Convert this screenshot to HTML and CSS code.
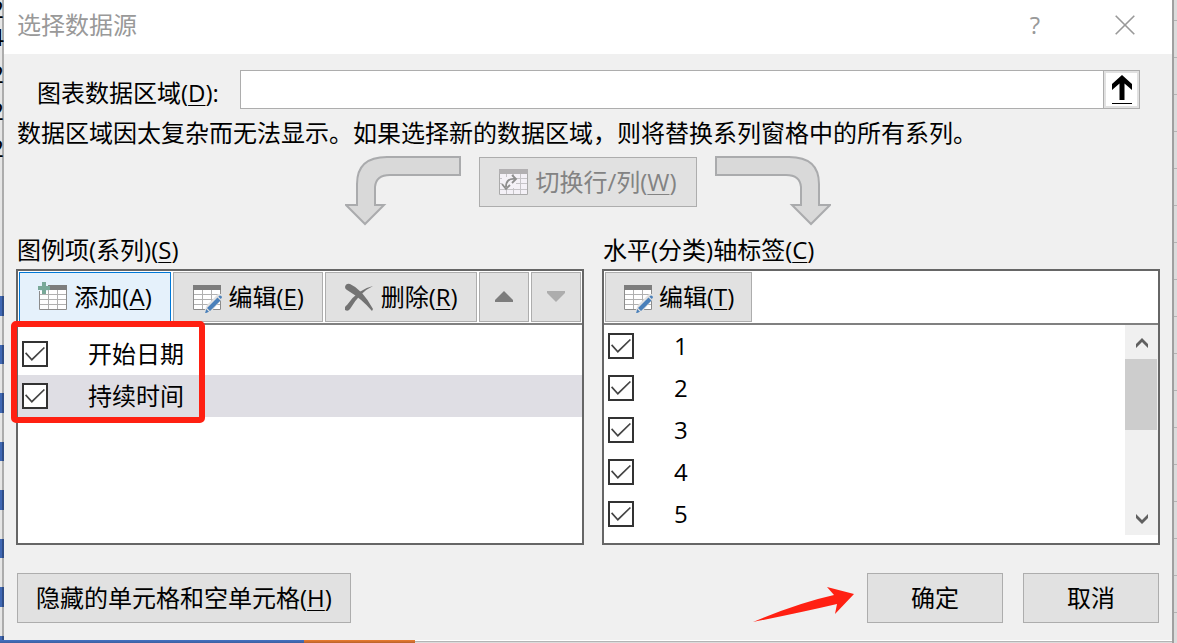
FILE: index.html
```html
<!DOCTYPE html>
<html lang="zh-CN">
<head>
<meta charset="utf-8">
<title>选择数据源</title>
<link rel="stylesheet" href="styles.css">
</head>
<body>
<svg class="defs" aria-hidden="true">
  <symbol id="grid" viewBox="0 0 30 32">
    <path fill="#fff" d="M1 4h28v25H1z"/>
    <path stroke="#b0b0b0" fill="none" d="M10.500 8v21M19.500 8v21M1 13.500h28M1 18.500h28M1 23.500h28"/>
    <path stroke="#8c8c8c" fill="none" d="M1.500 4v24.500h27V4"/>
    <path fill="#7d7d7d" d="M1 4h28v5H1z"/>
  </symbol>
  <symbol id="edit" viewBox="0 0 30 32">
    <use href="#grid" width="30" height="32"/>
    <path fill="#e1e1e1" d="M11 33l4-9 11-11h4v5L19 31z"/>
    <path fill="#4a80ba" d="M13 32.500l1.200-4.500 2.800 2.800zM15 27L25.500 16.500l3 3L18 30zM26.300 15.700l1-1q1-.7 2 .3t.3 2l-.8 1z"/>
  </symbol>
</svg>
<div class="desk">
  <div class="rows" aria-hidden="true"><span>2</span><span>4</span><span>2</span><span>2</span><span>2</span></div>
  <main class="dialog">
    <header class="titlebar">
      <h1>选择数据源</h1>
      <button class="plain" aria-label="帮助">?</button>
      <button class="plain" aria-label="关闭"><svg width="20" height="20"><path d="M.7.7l18.600 18.600M19.300.7L.7 19.300" stroke="#999" stroke-width="1.600"/></svg></button>
    </header>
    <div class="content">
      <div class="range">
        <label for="range">图表数据区域(<u>D</u>):</label>
        <div class="field"><input id="range" type="text"><button aria-label="选择区域"><svg width="20" height="30"><path d="M10 0l10 9v6l-7.500-6.500V25h-5V8.500L0 15V9zM0 28h20v1H0z"/></svg></button></div>
      </div>
      <p class="note">数据区域因太复杂而无法显示。如果选择新的数据区域，则将替换系列窗格中的所有系列。</p>
      <div class="swap">
        <svg class="bend" width="116" height="70" viewBox="0 0 116 70"><path d="M115 1H42Q12 1 12 28V49H1L20 68 39 49H30V31Q31 19 45 19H115z"/></svg>
        <button class="btn switch" disabled>
          <svg width="30" height="26"><path fill="#f4f1f7" d="M0 0h29v26H0z"/><path d="M7.500 4v22M14.500 4v22M21.500 4v22M0 9.500h29M0 14.500h29M0 20.500h29" stroke="#c6c4c8"/><path d="M.5 4v21.500h28V4" fill="none" stroke="#aaa"/><path fill="#b2b0b2" d="M0 0h29v5H0z"/><path fill="#f4f1f7" d="M3 8h14v11H3z"/><path d="M7 18Q7 9 16 10M13 6l4 4-4 4M3 15l4 5 4-4" fill="none" stroke="#8d8d8d" stroke-width="1.800"/></svg>
          <span>切换行/列(<u>W</u>)</span></button>
        <svg class="bend" width="116" height="70" viewBox="0 0 116 70"><path d="M1 1H74Q104 1 104 28V49H115L96 68 77 49H86V31Q85 19 71 19H1z"/></svg>
      </div>
      <div class="panels">
        <section>
          <h2>图例项(系列)(<u>S</u>)</h2>
          <div class="panel">
            <div class="tools">
              <button class="btn grow active"><svg width="30" height="32"><use href="#grid" width="30" height="32"/><path fill="#e5f1fb" d="M0 0h10v10H0z"/><path fill="#78a898" d="M4 1h4v4h4v4H8v4H4V9H0V5h4z"/></svg><span>添加(<u>A</u>)</span></button>
              <button class="btn grow"><svg width="30" height="32"><use href="#edit" width="30" height="32"/></svg><span>编辑(<u>E</u>)</span></button>
              <button class="btn grow"><svg width="30" height="32"><path fill="#737373" d="M0 6Q1 2 5 3 17 8 28 28L27 30Q17 18 2 9 0 8 0 6zM28 5Q15 11 5 28 3 31 0 29-1 26 2 24 13 8 28 5z"/></svg><span>删除(<u>R</u>)</span></button>
              <button class="btn small" aria-label="上移"><svg width="18" height="12"><path fill="#7d7d7d" d="M9 0l9 9v2H0V9z"/></svg></button>
              <button class="btn small" aria-label="下移" disabled><svg width="18" height="12"><path fill="#adadad" d="M0 0h18v2l-9 9-9-9z"/></svg></button>
            </div>
            <div class="list series">
              <label><input type="checkbox" checked><span>开始日期</span></label>
              <label class="selected"><input type="checkbox" checked><span>持续时间</span></label>
            </div>
            <div class="highlight"></div>
          </div>
        </section>
        <section>
          <h2>水平(分类)轴标签(<u>C</u>)</h2>
          <div class="panel">
            <div class="tools">
              <button class="btn"><svg width="30" height="32"><use href="#edit" width="30" height="32"/></svg><span>编辑(<u>T</u>)</span></button>
            </div>
            <div class="scroll">
              <div class="list">
                <label><input type="checkbox" checked><span>1</span></label>
                <label><input type="checkbox" checked><span>2</span></label>
                <label><input type="checkbox" checked><span>3</span></label>
                <label><input type="checkbox" checked><span>4</span></label>
                <label><input type="checkbox" checked><span>5</span></label>
              </div>
              <div class="bar">
                <button aria-label="向上滚动"><svg width="12" height="10"><path d="M6 0l6 6v4L6 4 0 10V6z"/></svg></button>
                <div class="thumb"></div>
                <button aria-label="向下滚动"><svg width="12" height="10"><path d="M6 10l6-6V0L6 6 0 0v4z"/></svg></button>
              </div>
            </div>
          </div>
        </section>
      </div>
      <footer>
        <button class="btn hidden-cells"><span>隐藏的单元格和空单元格(<u>H</u>)</span></button>
        <svg class="pointer" width="102" height="36"><path fill="#ff2012" d="M0 35Q45 16 81 8L74 0 101 7 82 27 84 17Q50 25 0 35z"/></svg>
        <button class="btn action">确定</button>
        <button class="btn action">取消</button>
      </footer>
    </div>
  </main>
</div>
</body>
</html>
```
FILE: styles.css
```css
* { box-sizing: border-box; }
body {
  margin: 0;
  overflow: hidden;
  color: #000;
  font: 24px/32px "Open Sans", "Noto Sans CJK SC", sans-serif;
}
button, input { font: inherit; color: inherit; margin: 0; }
svg { display: block; flex: none; }
u { text-decoration-thickness: 1px; text-underline-offset: 3px; }
.defs { position: absolute; width: 0; height: 0; }

.desk {
  display: grid;
  grid-template-columns: 4px 1fr;
  min-height: 100vh;
  padding: 0 5px 3px 0;
  background:
    linear-gradient(#4472c4, #3c5f9f) 0 100% / 304px 3px no-repeat,
    linear-gradient(#ed7d31, #b8622b) 304px 100% / 111px 3px no-repeat,
    linear-gradient(#fff 1px, #b4b4b4 1px 2px, #dcdcdc 2px) 0 100% / calc(100% - 5px) 3px no-repeat,
    linear-gradient(90deg, #a0a0a0 2px, transparent 2px) 100% 0 / 5px 100% no-repeat,
    repeating-linear-gradient(#dcdcdc 0 20px, #b4b4b4 20px 21px, #dcdcdc 21px 37px);
}
.rows {
  display: flex;
  flex-direction: column;
  align-items: flex-end;
  overflow: hidden;
  background:
    linear-gradient(90deg, transparent 2px, rgba(0, 0, 0, .25) 2px),
    repeating-linear-gradient(#4068b4 0 20px, transparent 20px 49px, #4068b4 49px 68px, transparent 68px 97px) 0 296px no-repeat,
    #e6e6e6;
}
.rows span { line-height: 37px; }
.rows span:first-child { line-height: 18px; }

.dialog { background: #f0f0f0; }
.titlebar {
  display: flex;
  align-items: center;
  height: 54px;
  padding: 0 37px 4px 13px;
  background: #fff;
  color: #999;
}
h1, h2 { margin: 0; font-size: 24px; font-weight: 400; }
h1 { flex: 1; }
.plain { display: grid; place-items: center; padding: 0; border: 0; background: none; }
.plain + .plain { margin-left: 75px; }

.content { padding: 16px 12px 17px; }
.range { display: flex; align-items: flex-end; height: 39px; padding: 0 20px 0 21px; }
.range label { width: 203px; }
.field { display: flex; flex: 1; height: 39px; border: 1px solid #adadad; background: #fff; }
.field input { flex: 1; min-width: 0; border: 0; padding: 0 8px; background: none; outline: 0; }
.field button {
  display: grid;
  place-items: center;
  width: 35px;
  padding: 0;
  border: 2px solid #e1e1e1;
  outline: 1px solid #adadad;
  background: #fff;
}
.note { margin: 8px 0 7px; padding-left: 1px; white-space: nowrap; }

.swap { display: flex; justify-content: center; gap: 18px; height: 70px; margin-bottom: 8px; }
.bend path { fill: #d9d9d9; stroke: #aaabad; stroke-width: 2px; }
.btn {
  display: flex;
  align-items: center;
  justify-content: center;
  gap: 6px;
  height: 50px;
  padding: 0 17px;
  border: 1px solid #adadad;
  background: #e1e1e1;
  white-space: nowrap;
}
.switch { width: 218px; color: #838383; margin-top: 1px; }

.panels { display: grid; grid-template-columns: 568fr 558fr; gap: 18px; }
h2 { padding: 0 1px 2px; height: 35px; }
.panel { position: relative; height: 276px; border: 2px solid #666; background: #fff; }
.tools { display: flex; gap: 2px; padding: 1px; border-bottom: 2px solid #808080; }
.grow { flex: 1 1 auto; }
.active { border-color: #0078d7; background: #e5f1fb; }
.small { width: 50px; padding: 0; }
.list { flex: 1; }
.series { padding-top: 8px; }
.list label { display: flex; align-items: center; gap: 40px; height: 42px; padding-left: 4px; }
.list .selected { background: #dfdee4; }
.list input {
  appearance: none;
  display: grid;
  place-items: center;
  width: 26px;
  height: 26px;
  border: 2px solid #333;
  background: #fff;
}
.list input:checked::before {
  content: "";
  width: 20px;
  height: 14px;
  background: #444;
  clip-path: polygon(0 46%, 6% 38%, 34% 82%, 94% 0, 100% 8%, 34% 100%);
}
.highlight {
  position: absolute;
  left: -7px;
  top: 50px;
  width: 194px;
  height: 102px;
  border: 6px solid #ff2012;
  border-radius: 5px;
}
.scroll { display: flex; }
.bar { display: flex; flex-direction: column; width: 33px; background: #f0f0f0; }
.bar button { display: grid; place-items: center; height: 34px; padding: 2px 0 0; border: 0; background: none; }
.bar button:last-child { margin-top: auto; }
.bar path { fill: #606060; }
.thumb { height: 71px; margin-right: 1px; background: #cdcdcd; }

footer { display: flex; align-items: center; height: 50px; margin-top: 28px; padding: 0 1px; }
.hidden-cells { padding: 0 18px; }
.pointer { align-self: flex-end; margin: 0 12px 0 auto; }
.action { width: 136px; }
.action + .action { margin-left: 20px; }
```
